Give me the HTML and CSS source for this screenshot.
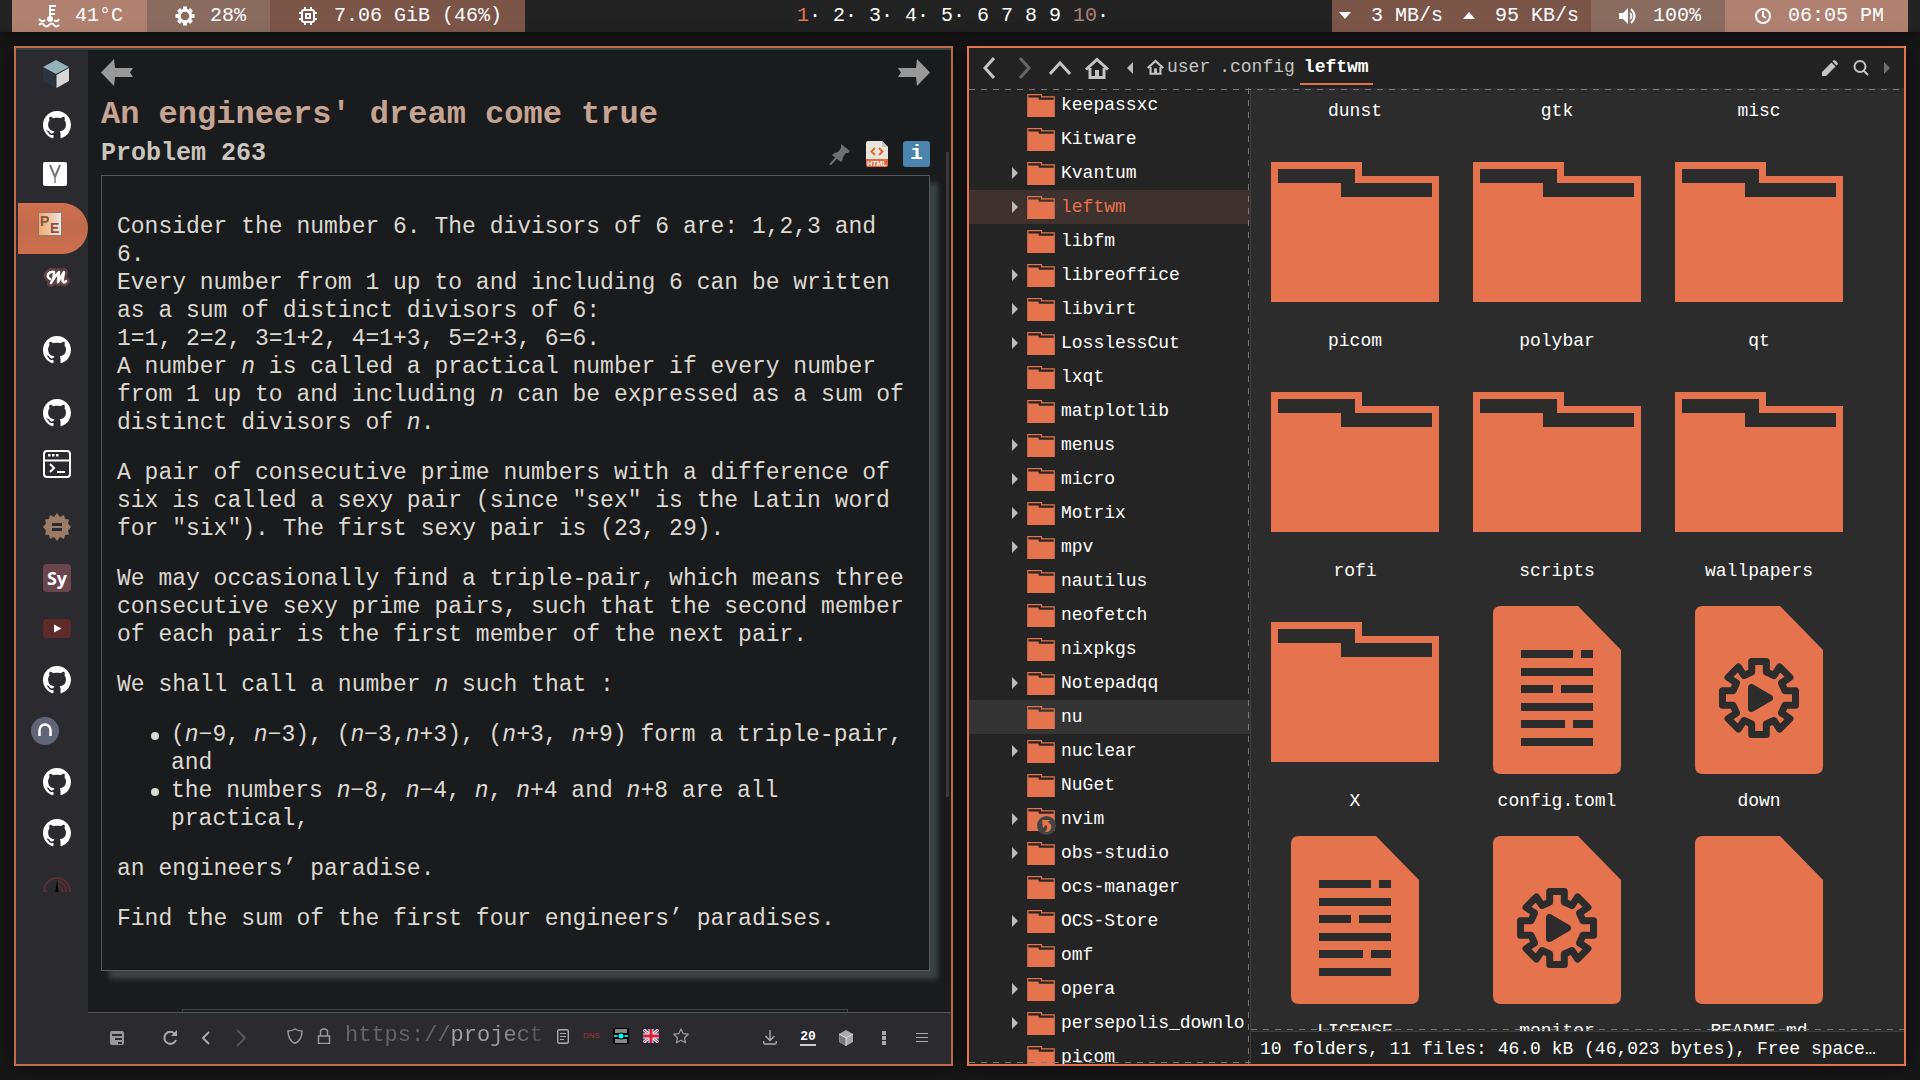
FILE: index.html
```html
<!DOCTYPE html>
<html lang="en">
<head>
<meta charset="utf-8">
<title>Desktop</title>
<link rel="stylesheet" href="styles.css">
</head>
<body>
<svg class="defs" aria-hidden="true">
  <symbol id="folder" viewBox="0 0 24 20"><path fill="#e5744e" fill-rule="evenodd" d="M0 0H13V2H24V20H0ZM1 1V3H10V5H23V3H12V1Z"/></symbol>
  <symbol id="doc" viewBox="0 0 128 168"><path fill="#e5744e" d="M8 0H85L128 44V160Q128 168 120 168H8Q0 168 0 160V8Q0 0 8 0Z"/></symbol>
  <symbol id="textdoc" viewBox="0 0 128 168"><use href="#doc"/><path fill="#2c2c2c" d="M28 44h52v8H28zM88 44h12v8H88zM28 62h72v8H28zM28 79h32v8H28zM68 79h32v8H68zM28 97h72v8H28zM28 114h44v8H28zM80 114h20v8H80zM28 132h72v8H28z"/></symbol>
  <symbol id="geardoc" viewBox="0 0 128 168"><use href="#doc"/><g transform="translate(64 92)" stroke="#2c2c2c" stroke-width="7" stroke-linejoin="round"><path fill="none" d="M-7.3-26V-36.5H7.3V-26L15-22.500L20.6-31L31-20.6L22.500-15L26-7.3H36.5V7.3H26L22.500 15L31 20.6L20.6 31L15 22.500L7.3 26V36.5H-7.3V26L-15 22.500L-20.6 31L-31 20.6L-22.500 15L-26 7.3H-36.5V-7.3H-26L-22.500-15L-31-20.6L-20.6-31L-15-22.500Z"/><path fill="#2c2c2c" d="M-7.5-10.5V10.5L10.5 0Z"/></g></symbol>
  <symbol id="github" viewBox="0 0 16 16"><path fill="#fff" d="M8 0C3.58 0 0 3.58 0 8c0 3.54 2.29 6.53 5.47 7.59.4.07.55-.17.55-.38 0-.19-.01-.82-.01-1.49-2.01.37-2.53-.49-2.69-.94-.09-.23-.48-.94-.82-1.13-.28-.15-.68-.52-.01-.53.63-.01 1.08.58 1.23.82.72 1.21 1.87.87 2.33.66.07-.52.28-.87.51-1.07-1.78-.2-3.64-.89-3.64-3.95 0-.87.31-1.59.82-2.15-.08-.2-.36-1.02.08-2.12 0 0 .67-.21 2.2.82.64-.18 1.32-.27 2-.27s1.36.09 2 .27c1.53-1.04 2.2-.82 2.2-.82.44 1.1.16 1.92.08 2.12.51.56.82 1.27.82 2.15 0 3.07-1.87 3.75-3.65 3.95.29.25.54.73.54 1.48 0 1.07-.01 1.93-.01 2.2 0 .21.15.46.55.38A8.01 8.01 0 0 0 16 8c0-4.42-3.58-8-8-8z"/></symbol>
  <symbol id="home" viewBox="0 0 24 22"><path fill="none" stroke="currentColor" stroke-width="3" d="M1 12.500L12 2.500L23 12.500M5 11V20.500H19V11"/><path fill="currentColor" d="M10 13h4v8h-4z"/></symbol>
  <symbol id="tri" viewBox="0 0 6 12"><path fill="#bbb" d="M0 0L6 6L0 12Z"/></symbol>
</svg>

<header class="topbar">
  <div class="mods">
    <div class="mod rose temp"><svg width="22" height="24" viewBox="0 0 22 24"><path fill="none" stroke="#fff" stroke-width="2" d="M12 1V15M13 2h5M13 6h4M13 10h4"/><circle cx="12" cy="15" r="3" fill="#fff"/><path fill="none" stroke="#fff" stroke-width="2" d="M1 15q3 4 6 1M16 16q3 3 5-1M1 21q3-3 5 0t5 0t5 0t5 0"/></svg><span>41°C</span></div>
    <div class="mod taupe cpu"><svg width="20" height="20" viewBox="-10 -10 20 20"><circle r="5.800" fill="none" stroke="#fff" stroke-width="3"/><path stroke="#fff" stroke-width="4" d="M0-9.500V-6M0 9.500V6M-9.500 0H-6M9.500 0H6M-6.500-6.500L-5-5M6.500-6.500L5-5M-6.500 6.500L-5 5M6.500 6.500L5 5"/></svg><span>28%</span></div>
    <div class="mod brown mem"><svg width="18" height="18" viewBox="0 0 18 18"><rect x="3" y="3" width="12" height="12" rx="2" fill="none" stroke="#fff" stroke-width="2"/><rect x="7" y="7" width="4" height="4" fill="none" stroke="#fff" stroke-width="2"/><path stroke="#fff" stroke-width="2" d="M6 0v3M12 0v3M6 15v3M12 15v3M0 6h3M0 12h3M15 6h3M15 12h3"/></svg><span>7.06 GiB (46%)</span></div>
  </div>
  <nav class="spaces" aria-label="Workspaces"><b>1</b>· 2· 3· 4· 5· 6 7 8 9 <i>10</i>·</nav>
  <div class="mods right">
    <div class="mod brown net"><svg width="12" height="8" viewBox="0 0 12 8"><path fill="#fff" d="M0 0H12L6 7Z"/></svg><span>3 MB/s</span><svg width="12" height="8" viewBox="0 0 12 8"><path fill="#fff" d="M0 7H12L6 0Z"/></svg><span>95 KB/s</span></div>
    <div class="mod taupe vol"><svg width="18" height="16" viewBox="0 0 18 16"><path fill="#fff" d="M0 5H4L9 0V16L4 11H0Z"/><path fill="none" stroke="#fff" stroke-width="2" d="M11 5q3 3 0 6M12 1q7 7 0 14"/></svg><span>100%</span></div>
    <div class="mod rose clock"><svg width="18" height="18" viewBox="0 0 18 18"><circle cx="9" cy="9" r="7" fill="none" stroke="#fff" stroke-width="2"/><path fill="none" stroke="#fff" stroke-width="2" d="M9 4V9L12 11"/></svg><span>06:05 PM</span></div>
  </div>
</header>

<main class="desk">
  <section class="win browser">
    <div class="upper">
      <div class="tabs" role="tablist" aria-label="Tabs">
        <button class="tab" aria-label="Cube"><svg width="28" height="28" viewBox="0 0 28 28"><path fill="#93b3b8" d="M13 0L26 7L13 14L0 7Z"/><path fill="#2b3440" d="M0 8L12.500 15V28L0 21Z"/><path fill="#d6d6d6" d="M26 8L13.500 15V28L26 21Z"/></svg></button>
        <button class="tab" aria-label="GitHub"><svg width="28" height="28"><use href="#github"/></svg></button>
        <button class="tab" aria-label="Vim notes"><svg width="28" height="28" viewBox="0 0 28 28"><rect width="24" height="24" rx="2" fill="#fff"/><path fill="none" stroke="#777" stroke-width="2" d="M7 3L12 15L17 3"/><path stroke="#8fa3ad" stroke-width="2" d="M12 16v5"/></svg></button>
        <button class="tab active" aria-label="Project Euler"><svg width="24" height="24" viewBox="0 0 24 24"><defs><linearGradient id="pe"><stop offset="0" stop-color="#f0a868"/><stop offset="1" stop-color="#f2e4df"/></linearGradient></defs><rect x=".5" y=".5" width="23" height="23" fill="url(#pe)" stroke="#8c7a74"/><text x="2" y="14" class="pe-letter">P</text><text x="12" y="21" class="pe-letter">E</text></svg></button>
        <button class="tab" aria-label="M"><svg width="28" height="22" viewBox="0 0 28 22"><g fill="none" stroke-linecap="round" stroke-linejoin="round"><path stroke="#5e4040" stroke-width="8" d="M7 12C2 9 6 4 11 5L8 16Q12 9 16 5L15 15L21 5L19.500 14Q21 17 23 14"/><path stroke="#fff" stroke-width="2.500" d="M7 12C2 9 6 4 11 5Q11 12 8 16Q12 9 16 5L15 15L21 5L19.500 14Q21 17 23 14"/></g></svg></button>
        <button class="tab gap-l" aria-label="GitHub"><svg width="28" height="28"><use href="#github"/></svg></button>
        <button class="tab gap-s" aria-label="GitHub"><svg width="28" height="28"><use href="#github"/></svg></button>
        <button class="tab" aria-label="Terminal"><svg width="28" height="28" viewBox="0 0 28 28"><g fill="none" stroke="#fff" stroke-width="2"><rect x="1" y="1" width="26" height="26" rx="3"/><path d="M1 10.500H27M7 14L11 18L7 22M14 22h8"/></g><path fill="#fff" d="M5 4h2.500v2.500H5zM9 4h2.500v2.500H9zM13 4h2.500v2.500H13z"/></svg></button>
        <button class="tab gap-s" aria-label="Badge"><svg width="28" height="28" viewBox="-14 -14 28 28"><path fill="#9c7b66" d="M0-14L3-10L7-12L8-8L12-7.500L11-3.500L14 0L11 3.500L12 7.500L8 8L7 12L3 10L0 14L-3 10L-7 12L-8 8L-12 7.500L-11 3.500L-14 0L-11-3.500L-12-7.500L-8-8L-7-12L-3-10Z"/><path stroke="#2b2a2f" stroke-width="3" d="M-5-2.500H5M-5 2.500H5"/></svg></button>
        <button class="tab" aria-label="Symfony"><span class="sy">Sy</span></button>
        <button class="tab" aria-label="YouTube"><svg width="28" height="19" viewBox="0 0 28 19"><rect width="28" height="19" rx="4" fill="#5e2a2a"/><path fill="#fff" d="M11 5.500L18.500 9.500L11 13.500Z"/></svg></button>
        <button class="tab" aria-label="GitHub"><svg width="28" height="28"><use href="#github"/></svg></button>
        <button class="tab indent" aria-label="Nim"><svg width="28" height="28" viewBox="0 0 28 28"><circle cx="14" cy="14" r="14" fill="#606678"/><path fill="none" stroke="#fff" stroke-width="2.500" d="M8.500 19V13A5.500 5.500 0 0 1 19.500 13V19"/></svg></button>
        <button class="tab" aria-label="GitHub"><svg width="28" height="28"><use href="#github"/></svg></button>
        <button class="tab" aria-label="GitHub"><svg width="28" height="28"><use href="#github"/></svg></button>
        <button class="tab" aria-label="Speed test"><svg width="28" height="16" viewBox="0 0 28 16"><path fill="none" stroke="#592f33" stroke-width="2" d="M1 16A13 14 0 0 1 27 16M15 5A10 10 0 0 1 23 16M15 9A6 7 0 0 1 19 16M1 15H4"/><path fill="#000" d="M12.500 16L14 4L15.500 16Z"/></svg></button>
      </div>
      <article class="page">
        <div class="pager">
          <button aria-label="Previous problem"><svg width="32" height="27" viewBox="0 0 32 27"><path fill="#999" d="M0 13.500L13 0L14 9H32L29 13.500L32 18H14L13 27Z"/></svg></button>
          <button aria-label="Next problem"><svg width="32" height="27" viewBox="0 0 32 27"><path fill="#999" d="M32 13.500L19 0L18 9H0L3 13.500L0 18H18L19 27Z"/></svg></button>
        </div>
        <h1>An engineers' dream come true</h1>
        <div class="sub">
          <h2>Problem 263</h2>
          <div class="tools">
            <button aria-label="Pin"><svg width="22" height="22" viewBox="0 0 22 22"><path fill="#6f6f6f" d="M12 1L21 8L19 10L17 10L14 14Q14 17 12 19L3 12Q6 9 9 9L12 5V1Z"/><path stroke="#6f6f6f" stroke-width="2" d="M8 14L1 22"/></svg></button>
            <button aria-label="HTML version"><svg width="22" height="26" viewBox="0 0 22 26"><path fill="#e8e6dc" d="M2 0H16L22 6V18H0V2Q0 0 2 0Z"/><path fill="#c9c6bd" d="M16 0V6H22Z"/><path fill="#e4683c" d="M0 18H22V24Q22 26 20 26H2Q0 26 0 24Z"/><path fill="none" stroke="#e4683c" stroke-width="2" d="M9 7L5.500 10.500L9 14M13 7L16.500 10.500L13 14"/><text x="11" y="25" class="html-tag">HTML</text></svg></button>
            <button class="info" aria-label="Information">i</button>
          </div>
        </div>
        <div class="problem">
          <p>Consider the number 6. The divisors of 6 are: 1,2,3 and 6.<br>Every number from 1 up to and including 6 can be written as a sum of distinct divisors of 6:<br>1=1, 2=2, 3=1+2, 4=1+3, 5=2+3, 6=6.<br>A number <i>n</i> is called a practical number if every number from 1 up to and including <i>n</i> can be expressed as a sum of distinct divisors of <i>n</i>.</p>
          <p>A pair of consecutive prime numbers with a difference of six is called a sexy pair (since "sex" is the Latin word for "six"). The first sexy pair is (23, 29).</p>
          <p>We may occasionally find a triple-pair, which means three consecutive sexy prime pairs, such that the second member of each pair is the first member of the next pair.</p>
          <p>We shall call a number <i>n</i> such that :</p>
          <ul>
            <li>(<i>n</i>−9, <i>n</i>−3), (<i>n</i>−3,<i>n</i>+3), (<i>n</i>+3, <i>n</i>+9) form a triple-pair, and</li>
            <li>the numbers <i>n</i>−8, <i>n</i>−4, <i>n</i>, <i>n</i>+4 and <i>n</i>+8 are all practical,</li>
          </ul>
          <p>an engineers’ paradise.</p>
          <p>Find the sum of the first four engineers’ paradises.</p>
        </div>
        <div class="answer"></div>
        <div class="thumb"></div>
      </article>
    </div>
    <div class="toolbar">
      <button class="t-side" aria-label="Sidebar"><svg width="14" height="14" viewBox="0 0 14 14"><rect width="14" height="14" rx="2" fill="#999"/><path stroke="#2b2a2f" stroke-width="2" d="M2 4h10M5 8h7M8 12h4"/></svg></button>
      <button class="t-load" aria-label="Reload"><svg width="16" height="16" viewBox="0 0 16 16"><path fill="none" stroke="#aaa" stroke-width="2" d="M13 4A6 6 0 1 0 14 10"/><path fill="#aaa" d="M15 0V6H9Z"/></svg></button>
      <button class="t-back" aria-label="Back"><svg width="8" height="14" viewBox="0 0 8 14"><path fill="none" stroke="#aaa" stroke-width="2" d="M7 1L1 7L7 13"/></svg></button>
      <button class="t-fwd" aria-label="Forward"><svg width="10" height="18" viewBox="0 0 10 18"><path fill="none" stroke="#555" stroke-width="2" d="M1 1L9 9L1 17"/></svg></button>
      <div class="urlbar">
        <svg width="16" height="16" viewBox="0 0 16 16"><path fill="none" stroke="#999" stroke-width="1.500" d="M8 1Q11 3 15 3Q15 12 8 15.500Q1 12 1 3Q5 3 8 1Z"/></svg>
        <svg width="14" height="16" viewBox="0 0 14 16"><path fill="none" stroke="#999" stroke-width="1.500" d="M1.500 8h11v7.500h-11zM3.500 8V4Q3.500 1 7 1T10.500 4V8"/></svg>
        <input type="text" aria-label="Address" value="https://projecteuler.net/problem=263">
        <svg width="12" height="15" viewBox="0 0 12 15"><rect x=".7" y=".7" width="10.600" height="13.600" rx="1.500" fill="none" stroke="#aaa" stroke-width="1.400"/><path stroke="#aaa" d="M3 4.500h6M3 7.500h6M3 10.500h4"/></svg>
        <span class="dns">DNS</span>
        <svg width="16" height="16" viewBox="0 0 16 16"><rect width="16" height="16" rx="1" fill="#000"/><path fill="#888" d="M2 1h12v4H2zM2 11h12v4H2z"/><path fill="#0dd" d="M1 7h14v2H1z"/><circle cx="8" cy="8" r="3.500" fill="#000"/><circle cx="8" cy="8" r="2.500" fill="#0ff"/></svg>
        <svg width="16" height="14" viewBox="0 0 16 14"><path fill="#2a3c90" d="M0 0h16v14H0z"/><path stroke="#eee" stroke-width="3" d="M0 0L16 14M16 0L0 14"/><path stroke="#d8203a" d="M0 0L16 14M16 0L0 14"/><path stroke="#eee" stroke-width="5" d="M8 0V14M0 7H16"/><path stroke="#d8203a" stroke-width="3" d="M8 0V14M0 7H16"/></svg>
        <svg width="16" height="16" viewBox="0 0 16 16"><path fill="none" stroke="#999" stroke-width="1.300" stroke-linejoin="round" d="M8 1L10.200 5.600L15.200 6.200L11.500 9.700L12.500 14.700L8 12.200L3.500 14.700L4.500 9.700L.8 6.200L5.800 5.600Z"/></svg>
      </div>
      <div class="actions">
        <button aria-label="Downloads"><svg width="14" height="15" viewBox="0 0 14 15"><path fill="none" stroke="#aaa" stroke-width="1.400" d="M7 0V10M2.500 6L7 10.500L11.500 6M.7 11V12.500Q.7 14 2.200 14H11.800Q13.300 14 13.300 12.500V11"/></svg></button>
        <button aria-label="20 items"><span class="count">20</span></button>
        <button aria-label="Containers"><svg width="16" height="16" viewBox="0 0 16 16"><path fill="#aaa" d="M8 0L15 4V12L8 16L1 12V4Z"/><path fill="#777" d="M1.500 4.500L8 8V15.500L1.500 12Z"/><path fill="none" stroke="#ddd" d="M1 4L8 8L15 4M8 8V16"/></svg></button>
        <button aria-label="More"><svg width="4" height="14" viewBox="0 0 4 14"><path fill="#aaa" d="M0 0h4v4H0zM0 5h4v4H0zM0 10h4v4H0z"/></svg></button>
        <button aria-label="Menu"><svg width="12" height="11" viewBox="0 0 12 11"><path stroke="#aaa" d="M0 1.500h12M0 5.500h12M0 9.500h12"/></svg></button>
      </div>
    </div>
  </section>

  <section class="win files">
    <div class="pathbar">
      <div class="nav">
        <button aria-label="Back"><svg width="12" height="22" viewBox="0 0 12 22"><path fill="none" stroke="#c4c4c4" stroke-width="3" d="M11 1L2 11L11 21"/></svg></button>
        <button aria-label="Forward"><svg width="12" height="22" viewBox="0 0 12 22"><path fill="none" stroke="#666" stroke-width="3" d="M1 1L10 11L1 21"/></svg></button>
        <button aria-label="Up"><svg width="22" height="14" viewBox="0 0 22 14"><path fill="none" stroke="#c4c4c4" stroke-width="3" d="M1 13L11 2L21 13"/></svg></button>
        <button aria-label="Home"><svg width="24" height="22"><use href="#home"/></svg></button>
      </div>
      <svg class="flip" width="6" height="12"><use href="#tri"/></svg>
      <nav class="crumbs" aria-label="Path"><a href="#user"><svg width="17" height="16"><use href="#home"/></svg>user</a><a href="#config">.config</a><a class="here" href="#leftwm">leftwm</a></nav>
      <div class="find">
        <button aria-label="Edit path"><svg width="16" height="16" viewBox="0 0 16 16"><path fill="#c4c4c4" d="M0 16V12L9.500 2.500L13.500 6.500L4 16ZM10.500 1.500L12 0Q13 0 14.500 1.500T16 4L14.500 5.500Z"/></svg></button>
        <button aria-label="Search"><svg width="16" height="16" viewBox="0 0 16 16"><circle cx="7" cy="6.500" r="5.500" fill="none" stroke="#c4c4c4" stroke-width="2"/><path stroke="#c4c4c4" stroke-width="2" d="M10.500 10.500L15 15"/></svg></button>
        <svg class="dim" width="6" height="12"><use href="#tri"/></svg>
      </div>
    </div>
    <div class="body">
      <ul class="tree">
        <li><svg class="fold"><use href="#folder"/></svg>keepassxc</li>
        <li><svg class="fold"><use href="#folder"/></svg>Kitware</li>
        <li class="more"><svg class="fold"><use href="#folder"/></svg>Kvantum</li>
        <li class="more sel"><svg class="fold"><use href="#folder"/></svg>leftwm</li>
        <li><svg class="fold"><use href="#folder"/></svg>libfm</li>
        <li class="more"><svg class="fold"><use href="#folder"/></svg>libreoffice</li>
        <li class="more"><svg class="fold"><use href="#folder"/></svg>libvirt</li>
        <li class="more"><svg class="fold"><use href="#folder"/></svg>LosslessCut</li>
        <li><svg class="fold"><use href="#folder"/></svg>lxqt</li>
        <li><svg class="fold"><use href="#folder"/></svg>matplotlib</li>
        <li class="more"><svg class="fold"><use href="#folder"/></svg>menus</li>
        <li class="more"><svg class="fold"><use href="#folder"/></svg>micro</li>
        <li class="more"><svg class="fold"><use href="#folder"/></svg>Motrix</li>
        <li class="more"><svg class="fold"><use href="#folder"/></svg>mpv</li>
        <li><svg class="fold"><use href="#folder"/></svg>nautilus</li>
        <li><svg class="fold"><use href="#folder"/></svg>neofetch</li>
        <li><svg class="fold"><use href="#folder"/></svg>nixpkgs</li>
        <li class="more"><svg class="fold"><use href="#folder"/></svg>Notepadqq</li>
        <li class="hover"><svg class="fold"><use href="#folder"/></svg>nu</li>
        <li class="more"><svg class="fold"><use href="#folder"/></svg>nuclear</li>
        <li><svg class="fold"><use href="#folder"/></svg>NuGet</li>
        <li class="more"><svg class="fold"><use href="#folder"/></svg><svg class="linked" viewBox="0 0 19 19"><circle cx="9.500" cy="9.500" r="9.500" fill="#444"/><path fill="#e5744e" d="M5 4H13L11 6Q18 11 11 16H8Q12 12 9 9L6 12Z"/></svg>nvim</li>
        <li class="more"><svg class="fold"><use href="#folder"/></svg>obs-studio</li>
        <li><svg class="fold"><use href="#folder"/></svg>ocs-manager</li>
        <li class="more"><svg class="fold"><use href="#folder"/></svg>OCS-Store</li>
        <li><svg class="fold"><use href="#folder"/></svg>omf</li>
        <li class="more"><svg class="fold"><use href="#folder"/></svg>opera</li>
        <li class="more"><svg class="fold"><use href="#folder"/></svg>persepolis_downlo</li>
        <li><svg class="fold"><use href="#folder"/></svg>picom</li>
      </ul>
      <div class="pane">
        <div class="view">
          <div class="grid">
            <button class="item"><svg class="f"><use href="#folder"/></svg>dunst</button>
            <button class="item"><svg class="f"><use href="#folder"/></svg>gtk</button>
            <button class="item"><svg class="f"><use href="#folder"/></svg>misc</button>
            <button class="item"><svg class="f"><use href="#folder"/></svg>picom</button>
            <button class="item"><svg class="f"><use href="#folder"/></svg>polybar</button>
            <button class="item"><svg class="f"><use href="#folder"/></svg>qt</button>
            <button class="item"><svg class="f"><use href="#folder"/></svg>rofi</button>
            <button class="item"><svg class="f"><use href="#folder"/></svg>scripts</button>
            <button class="item"><svg class="f"><use href="#folder"/></svg>wallpapers</button>
            <button class="item"><svg class="f"><use href="#folder"/></svg>X</button>
            <button class="item"><svg class="d"><use href="#textdoc"/></svg>config.toml</button>
            <button class="item"><svg class="d"><use href="#geardoc"/></svg>down</button>
            <button class="item"><svg class="d"><use href="#textdoc"/></svg>LICENSE</button>
            <button class="item"><svg class="d"><use href="#geardoc"/></svg>monitor</button>
            <button class="item"><svg class="d"><use href="#doc"/></svg>README.md</button>
          </div>
        </div>
        <div class="status">10 folders, 11 files: 46.0 kB (46,023 bytes), Free space…</div>
      </div>
    </div>
  </section>
</main>
</body>
</html>
```
FILE: styles.css
```css
* { box-sizing: border-box; }
body {
  margin: 0;
  height: 100vh;
  display: flex;
  flex-direction: column;
  overflow: hidden;
  background: #171717;
  color: #fff;
  font: 18px/22px "Liberation Mono", monospace;
}
button {
  margin: 0;
  padding: 0;
  border: 0;
  background: none;
  color: inherit;
  font: inherit;
}
a { color: inherit; text-decoration: none; }
svg { display: block; flex: none; }
.defs { position: absolute; width: 0; height: 0; }

/* status bar */
.topbar {
  display: grid;
  grid-template-columns: 1fr auto 1fr;
  height: 32px;
  padding: 0 12px;
  background: #222;
  box-shadow: 0 0 14px rgba(0, 0, 0, .6);
  font-size: 20px;
  line-height: 32px;
  white-space: pre;
}
.mods { display: flex; }
.right { justify-content: flex-end; }
.mod { display: flex; align-items: center; }
.rose { background: #b08070; }
.taupe { background: #896b60; }
.brown { background: #7a5548; }
.temp { gap: 15px; padding: 0 24px 0 26px; }
.cpu { gap: 15px; padding: 0 24px 0 28px; }
.mem { gap: 17px; padding: 0 23px 0 29px; }
.net { gap: 20px; padding: 0 12px 0 7px; }
.vol { gap: 16px; padding: 0 24px 0 28px; }
.clock { gap: 16px; padding: 0 24px 0 29px; }
.spaces { padding-right: 14px; }
.spaces b { color: #e5744e; font-weight: 400; }
.spaces i { color: #b08070; font-style: normal; }

.desk {
  flex: 1;
  min-height: 0;
  display: grid;
  grid-template-columns: 1fr 1fr;
  gap: 14px;
  padding: 14px;
}
.win {
  display: flex;
  flex-direction: column;
  min-width: 0;
  min-height: 0;
  border: 2px solid #e5744e;
  box-shadow: 0 0 16px rgba(0, 0, 0, .6);
  overflow: hidden;
}

/* browser */
.browser { border-color: #bf6b4c; background: #2b2a2f; }
.upper {
  flex: 1;
  min-height: 0;
  display: flex;
  border-top: 2px solid #3a4144;
}
.tabs {
  width: 72px;
  flex: none;
  display: flex;
  flex-direction: column;
  padding-left: 2px;
  overflow: hidden;
}
.tab {
  flex: none;
  display: flex;
  align-items: center;
  height: 51px;
  padding: 0 0 4px 25px;
}
.gap-l { margin-top: 21px; }
.gap-s { margin-top: 12px; }
.indent { padding-left: 13px; }
.active {
  padding: 0 0 9px 20px;
  background: linear-gradient(#d0704f, #bf6a4c 50%, #d0704f);
  border-radius: 0 26px 26px 0;
}
.pe-letter { font: bold 14px "Liberation Sans", sans-serif; fill: #8a5440; }
.sy {
  width: 28px;
  background: #6b454d;
  border-radius: 4px;
  font: bold 18px/28px "Open Sans", sans-serif;
  text-align: center;
}
.page {
  position: relative;
  flex: 1;
  min-width: 0;
  padding: 9px 21px 0 13px;
  background: #1a1b1d;
  border-bottom: 1px solid #55585a;
  overflow: hidden;
}
.pager { display: flex; justify-content: space-between; }
h1 {
  margin: 9px 0 4px;
  color: #c6a493;
  font-size: 32px;
  line-height: 40px;
}
.sub {
  display: flex;
  align-items: center;
  justify-content: space-between;
  height: 30px;
  margin-bottom: 6px;
}
h2 { margin: 0; color: #c9c5bd; font-size: 25px; line-height: 30px; }
.tools { display: flex; align-items: center; gap: 15px; }
.html-tag { font: bold 7px "Liberation Sans", sans-serif; fill: #fff; text-anchor: middle; }
.info {
  width: 27px;
  background: #4b84ad;
  border-radius: 3px;
  font-size: 21px;
  font-weight: 700;
  line-height: 26px;
  text-align: center;
}
.problem {
  padding: 15px;
  border: 1px solid #56595b;
  box-shadow: 8px 8px 5px #3b4345;
  color: #dcd9d2;
  font-size: 23px;
  line-height: 28px;
}
.problem p, .problem ul { margin: 22px 0; }
.problem ul { padding-left: 54px; list-style: none; }
.problem li { position: relative; }
.problem li::before {
  content: "";
  position: absolute;
  left: -20px;
  top: 11px;
  width: 8px;
  height: 8px;
  border-radius: 50%;
  background: #dcd9d2;
}
.answer {
  margin: 38px 82px 0 81px;
  height: 80px;
  border: 1px solid #3f474a;
}
.thumb {
  position: absolute;
  top: 102px;
  right: 2px;
  width: 3px;
  height: 645px;
  background: #38393b;
}
.toolbar {
  flex: none;
  display: flex;
  align-items: center;
  height: 51px;
  padding: 0 10px 2px 94px;
}
.t-load { margin-left: 38px; }
.t-back { margin-left: 24px; }
.t-fwd { margin-left: 26px; }
.urlbar {
  display: flex;
  align-items: center;
  gap: 14px;
  margin-left: 41px;
  padding-bottom: 3px;
}
.urlbar input {
  width: 198px;
  height: 30px;
  padding: 0;
  border: 0;
  color: transparent;
  background: linear-gradient(90deg, #666 104px, #a2a2a2 104px, #a2a2a2 150px, transparent 214px);
  background-clip: text;
  -webkit-background-clip: text;
  font: 22px/30px "Liberation Mono", monospace;
}
.dns { width: 16px; color: #a83238; font: 8px/16px "Liberation Sans", sans-serif; }
.actions {
  flex: 1;
  display: flex;
  justify-content: flex-end;
}
.actions button {
  display: flex;
  align-items: center;
  justify-content: center;
  width: 38px;
}
.count {
  border-bottom: 2px solid #ccc;
  font-size: 13px;
  line-height: 15px;
  font-weight: 700;
}

/* file manager */
.files { background: #222; }
.pathbar {
  flex: none;
  display: flex;
  align-items: center;
  height: 40px;
  padding: 0 14px;
  color: #c4c4c4;
}
.nav { display: flex; align-items: center; gap: 18px; }
.nav button:first-child { margin-right: 6px; }
.nav button:last-child { margin-left: -4px; }
.flip { transform: scaleX(-1); margin: 0 14px 0 18px; }
.dim { opacity: .5; }
.crumbs { display: flex; gap: 5px; line-height: 32px; }
.crumbs a { display: flex; align-items: center; gap: 3px; border-bottom: 2px solid transparent; }
.crumbs a + a { padding-left: 4px; }
.crumbs .here { padding-right: 4px; color: #fff; font-weight: 700; border-color: #e5744e; }
.find { flex: 1; display: flex; align-items: center; justify-content: flex-end; gap: 15px; }
.body {
  position: relative;
  flex: 1;
  min-height: 0;
  display: grid;
  grid-template-columns: 281px 1fr;
}
.body::before, .view::after, .tree::before, .tree::after {
  content: "";
  position: absolute;
  z-index: 1;
  left: 0;
  right: 0;
  height: 1px;
  background: repeating-linear-gradient(90deg, #777 0 6px, transparent 6px 12px);
}
.body::before { top: 1px; }
.view::after { bottom: 1px; }
.tree::before { bottom: 1px; }
.tree::after {
  left: auto;
  right: 1px;
  top: 0;
  width: 1px;
  height: auto;
  bottom: 0;
  background: repeating-linear-gradient(#777 0 6px, transparent 6px 12px);
}
.tree {
  position: relative;
  margin: 0;
  padding: 0;
  background: #242424;
  list-style: none;
  overflow: hidden;
}
.tree li {
  position: relative;
  display: flex;
  align-items: center;
  gap: 6px;
  height: 34px;
  padding-left: 58px;
  white-space: nowrap;
}
.fold { width: 28px; height: 23px; }
.more::before {
  content: "";
  position: absolute;
  left: 43px;
  border: 6px solid transparent;
  border-left-color: #bbb;
  border-right-width: 0;
}
.linked { position: absolute; left: 68px; bottom: 1px; width: 19px; height: 19px; }
.sel { background: #3e312e; color: #e5744e; }
.hover { background: #343434; }
.pane {
  display: flex;
  flex-direction: column;
  min-width: 0;
  min-height: 0;
  border-left: 1px solid #3e3e3e;
  background: #2c2c2c;
}
.view { position: relative; flex: 1; min-height: 0; overflow: hidden; }
/* scrolled part-way down the first row */
.grid {
  display: grid;
  grid-template-columns: repeat(auto-fill, 202px);
  grid-auto-rows: 230px;
  margin-top: -172px;
  padding-left: 3px;
}
.item { display: flex; flex-direction: column; align-items: center; }
.item .f { width: 168px; height: 140px; margin: 16px 0 28px; }
.item .d { width: 128px; height: 168px; margin-bottom: 16px; }
.status {
  flex: none;
  height: 33px;
  padding: 0 9px;
  border-top: 1px solid #3e3e3e;
  background: #222;
  line-height: 34px;
  white-space: nowrap;
  overflow: hidden;
}
```
